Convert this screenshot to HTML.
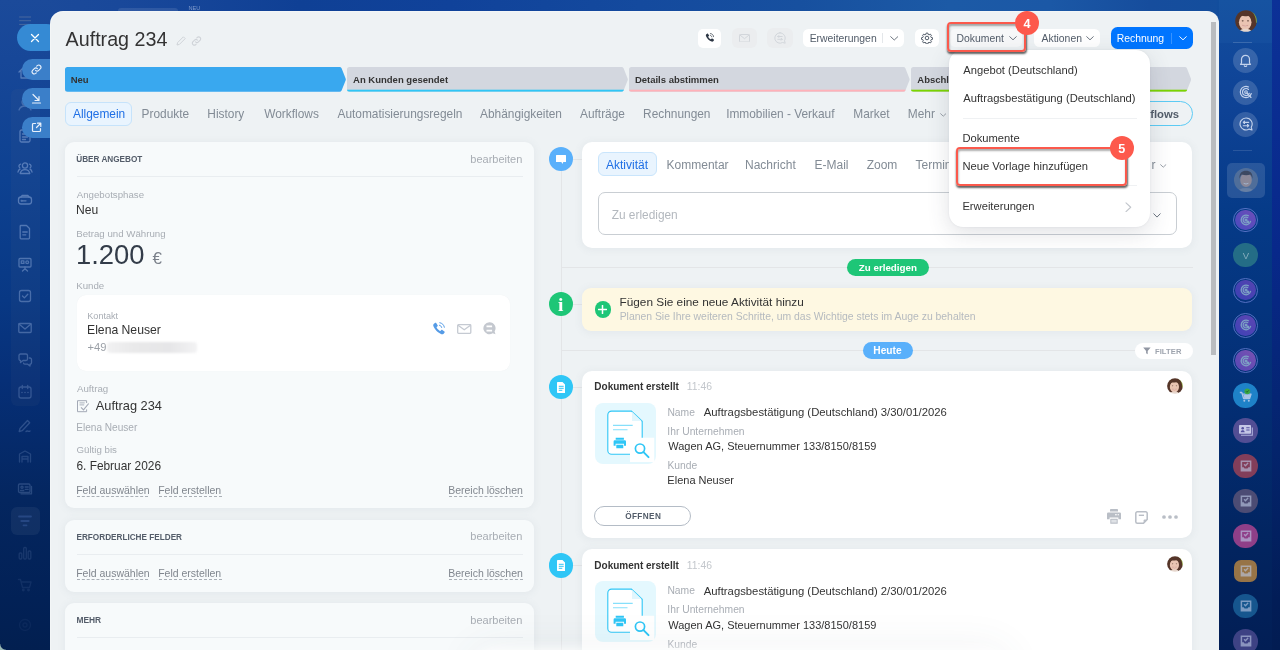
<!DOCTYPE html>
<html lang="de"><head><meta charset="utf-8"><title>Auftrag 234</title>
<style>
html,body{margin:0;padding:0}
body{width:1280px;height:650px;overflow:hidden;position:relative;font-family:"Liberation Sans",sans-serif;background:#0b3a88}
.b{position:absolute;box-sizing:border-box}
.t{position:absolute;line-height:1;white-space:pre}
.dash{border-bottom:1px dashed #b9bec4;padding-bottom:1px}
.serif{font-family:"Liberation Serif",serif;left:558.1px !important}
.t{opacity:.999}

</style></head>
<body>
<div class="b " style="left:0px;top:0px;width:1280.00px;height:650.00px;background:linear-gradient(90deg,#1c4b9a 0,#19489a 120px,#0f4095 300px,#10429a 450px,#144a9e 640px,#17509f 800px,#1c5aa6 950px,#1b58a6 1050px,#164d9d 1150px,#134e9d 1230px,#124e9d 1280px)"></div>
<div class="b " style="left:0px;top:0px;width:52.00px;height:650.00px;background:linear-gradient(180deg,#1b4a9a 0,#174798 60px,#0d4191 180px,#083884 300px,#062f77 380px,#04265f 500px,#022156 600px,#021f50 650px)"></div>
<div class="b " style="left:11px;top:89px;width:29.00px;height:317.00px;background:rgba(120,125,140,.065);border-radius:6px"></div>
<div class="b " style="left:11px;top:507px;width:28.50px;height:28.00px;background:rgba(255,255,255,.055);border-radius:6px"></div>
<div class="b " style="left:1217px;top:0px;width:63.00px;height:650.00px;background:linear-gradient(180deg,#124e9d 0,#10479a 60px,#0e4295 110px,#053a87 220px,#032e74 400px,#02245f 550px,#021e55 650px)"></div>
<div class="b " style="left:1272.4px;top:0px;width:7.60px;height:650.00px;background:linear-gradient(180deg,#0c3197 0,#08288a 250px,#04246c 450px,#021d57 600px,#021c52 650px)"></div>
<div class="b " style="left:1218.7px;top:0px;width:53.70px;height:43.00px;background:rgba(60,130,200,.10)"></div>
<div class="b " style="left:118px;top:8px;width:60.00px;height:6.00px;background:rgba(255,255,255,.10);border-radius:5px"></div>
<span class="t" style="left:188.55px;top:6.01px;font-size:5.6px;color:#7f9bcc;">NEU</span>
<svg class="b" style="left:19px;top:16px;" width="13" height="10" viewBox="0 0 13 10"><path d="M.2 1h11.8M.2 4.7h11.8M.2 8.4h11.8" stroke="#48699f" stroke-width="1" fill="none"/></svg>
<svg class="b" style="left:16px;top:63px;" width="18" height="18" viewBox="0 0 18 18"><g fill="none" stroke="#a9c1ea" stroke-width="1.3" stroke-linecap="round" stroke-linejoin="round" opacity="0.44"><path d="M3 9l6-6 6 6M5 8v7h8V8"/></g></svg>
<svg class="b" style="left:16px;top:95px;" width="18" height="18" viewBox="0 0 18 18"><g fill="none" stroke="#a9c1ea" stroke-width="1.3" stroke-linecap="round" stroke-linejoin="round" opacity="0.31"><circle cx="9" cy="7" r="3"/><path d="M3 15c1-3 3-4 6-4s5 1 6 4"/></g></svg>
<svg class="b" style="left:16px;top:127px;" width="18" height="18" viewBox="0 0 18 18"><g fill="none" stroke="#a9c1ea" stroke-width="1.3" stroke-linecap="round" stroke-linejoin="round" opacity="0.44"><rect x="4" y="3" width="10" height="12" rx="1.5"/><path d="M6.5 7h5M6.5 10h5M6.5 12.5h3"/></g></svg>
<svg class="b" style="left:16px;top:159px;" width="18" height="18" viewBox="0 0 18 18"><g fill="none" stroke="#a9c1ea" stroke-width="1.3" stroke-linecap="round" stroke-linejoin="round" opacity="0.44"><circle cx="9" cy="6.5" r="2.6"/><path d="M4.2 14.5c.6-2.6 2.3-3.8 4.8-3.8s4.2 1.2 4.8 3.8z"/><path d="M4.6 5.2a2 2 0 0 0-.8 3.6M2 13c.2-1.4.9-2.3 2-2.8M13.4 5.2a2 2 0 0 1 .8 3.6M16 13c-.2-1.4-.9-2.3-2-2.8"/></g></svg>
<svg class="b" style="left:16px;top:191px;" width="18" height="18" viewBox="0 0 18 18"><g fill="none" stroke="#a9c1ea" stroke-width="1.3" stroke-linecap="round" stroke-linejoin="round" opacity="0.44"><rect x="2.5" y="6" width="13" height="7" rx="2.5"/><path d="M5 6l1.2-1.5h5.6L13 6M6 9.8h4"/><circle cx="5.6" cy="9.8" r=".4"/></g></svg>
<svg class="b" style="left:16px;top:223px;" width="18" height="18" viewBox="0 0 18 18"><g fill="none" stroke="#a9c1ea" stroke-width="1.3" stroke-linecap="round" stroke-linejoin="round" opacity="0.42"><path d="M5 2.5h5.5L13.5 5.5V15a.8.8 0 0 1-.8.8H5a.8.8 0 0 1-.8-.8V3.300a.8.8 0 0 1 .8-.8z"/><path d="M6.8 9h4.4M6.800 11.800h3"/></g></svg>
<svg class="b" style="left:16px;top:255px;" width="18" height="18" viewBox="0 0 18 18"><g fill="none" stroke="#a9c1ea" stroke-width="1.3" stroke-linecap="round" stroke-linejoin="round" opacity="0.4"><rect x="3" y="3.500" width="12" height="8.500" rx="1"/><path d="M9 12v1.500M6.500 16l2.500-2.300 2.500 2.300"/><rect x="5.300" y="5.800" width="2.600" height="2.600"/><circle cx="11.200" cy="7.200" r="1.400"/></g></svg>
<svg class="b" style="left:16px;top:287px;" width="18" height="18" viewBox="0 0 18 18"><g fill="none" stroke="#a9c1ea" stroke-width="1.3" stroke-linecap="round" stroke-linejoin="round" opacity="0.37"><rect x="3.500" y="3.500" width="11" height="11" rx="2"/><path d="M6.500 9l1.900 1.900 3.400-3.600"/></g></svg>
<svg class="b" style="left:16px;top:319px;" width="18" height="18" viewBox="0 0 18 18"><g fill="none" stroke="#a9c1ea" stroke-width="1.3" stroke-linecap="round" stroke-linejoin="round" opacity="0.35"><rect x="2.800" y="4.500" width="12.400" height="9" rx="1"/><path d="M3 5l6 5 6-5"/></g></svg>
<svg class="b" style="left:16px;top:351px;" width="18" height="18" viewBox="0 0 18 18"><g fill="none" stroke="#a9c1ea" stroke-width="1.3" stroke-linecap="round" stroke-linejoin="round" opacity="0.32"><path d="M3 4.500a1.500 1.500 0 0 1 1.500-1.500h5.500a1.500 1.500 0 0 1 1.500 1.500v3.500a1.500 1.500 0 0 1-1.500 1.500h-3l-2.500 2v-2h-.0a1.500 1.500 0 0 1-1.500-1.500z"/><path d="M13.300 7h.7a1.500 1.500 0 0 1 1.500 1.500v3.200a1.500 1.500 0 0 1-1.500 1.500v1.800l-2.300-1.800h-2.700a1.500 1.500 0 0 1-1.400-1"/></g></svg>
<svg class="b" style="left:16px;top:383px;" width="18" height="18" viewBox="0 0 18 18"><g fill="none" stroke="#a9c1ea" stroke-width="1.3" stroke-linecap="round" stroke-linejoin="round" opacity="0.26"><rect x="3" y="4" width="12" height="11" rx="2"/><path d="M6.300 2.500v3M11.700 2.500v3"/><path d="M6 9.500h.01M9 9.500h.01M12 9.500h.01" stroke-width="1.600"/></g></svg>
<svg class="b" style="left:16px;top:416px;" width="18" height="18" viewBox="0 0 18 18"><g fill="none" stroke="#a9c1ea" stroke-width="1.3" stroke-linecap="round" stroke-linejoin="round" opacity="0.24"><path d="M4 12.500l7.500-8 2.200 2.200-7.500 8-3 .8z"/><path d="M10 15.500c1.500-1.500 2.500.8 4-.5"/></g></svg>
<svg class="b" style="left:16px;top:447px;" width="18" height="18" viewBox="0 0 18 18"><g fill="none" stroke="#a9c1ea" stroke-width="1.3" stroke-linecap="round" stroke-linejoin="round" opacity="0.19"><path d="M3.500 15V7l5.500-3 5.500 3v8"/><path d="M6 15v-5.500h6V15M6 12h6"/></g></svg>
<svg class="b" style="left:16px;top:480px;" width="18" height="18" viewBox="0 0 18 18"><g fill="none" stroke="#a9c1ea" stroke-width="1.3" stroke-linecap="round" stroke-linejoin="round" opacity="0.22"><rect x="2.500" y="4" width="11.500" height="8.500" rx="1.200"/><path d="M5 13.800h10.500V6.500"/><circle cx="6" cy="7.300" r="1.100"/><path d="M4.500 10.500h3.200M9.200 7h3M9.200 9.300h3"/></g></svg>
<svg class="b" style="left:16px;top:512px;" width="18" height="18" viewBox="0 0 18 18"><g stroke="#2f5190" stroke-width="1.800" stroke-linecap="round" opacity=".7"><path d="M3 4.500h12M5.300 9h7.400M7.500 13.300h3"/></g></svg>
<svg class="b" style="left:16px;top:543.5px;" width="18" height="18" viewBox="0 0 18 18"><g fill="none" stroke="#a9c1ea" stroke-width="1.3" stroke-linecap="round" stroke-linejoin="round" opacity="0.13"><rect x="3.200" y="9" width="2.600" height="6" rx="1"/><rect x="7.700" y="3.500" width="2.600" height="11.500" rx="1"/><rect x="12.200" y="7" width="2.600" height="8" rx="1"/></g></svg>
<svg class="b" style="left:16px;top:575.5px;" width="18" height="18" viewBox="0 0 18 18"><g fill="none" stroke="#a9c1ea" stroke-width="1.3" stroke-linecap="round" stroke-linejoin="round" opacity="0.09"><path d="M2.500 3.500h2l2 8h7l1.500-5.500h-10"/><circle cx="7.300" cy="14" r=".8"/><circle cx="12.500" cy="14" r=".8"/></g></svg>
<svg class="b" style="left:16px;top:615.5px;" width="18" height="18" viewBox="0 0 18 18"><g fill="none" stroke="#a9c1ea" stroke-width="1.3" stroke-linecap="round" stroke-linejoin="round" opacity="0.05"><circle cx="9" cy="9" r="5.500"/><circle cx="9" cy="9" r="2"/></g></svg>
<div class="b " style="left:0px;top:644px;width:6.00px;height:6.00px;background:radial-gradient(circle at 6px 0,rgba(0,0,0,0) 5.2px,#9bb9b5 6.2px)"></div>
<div class="b " style="left:16.7px;top:24px;width:43.30px;height:27.00px;background:#358ad4;border-radius:13.500px"></div>
<svg class="b" style="left:30px;top:32.5px;" width="10" height="10" viewBox="0 0 10 10"><path d="M1.500 1.500l7 7M8.500 1.500l-7 7" stroke="#fff" stroke-width="1.300" stroke-linecap="round"/></svg>
<div class="b " style="left:22.3px;top:59px;width:37.70px;height:20.70px;background:#3b7fc9;border-radius:10.300px"></div>
<div class="b " style="left:22.3px;top:88px;width:37.70px;height:20.70px;background:#3b7fc9;border-radius:10.300px"></div>
<div class="b " style="left:22.3px;top:117px;width:37.70px;height:20.70px;background:#3b7fc9;border-radius:10.300px"></div>
<svg class="b" style="left:30.5px;top:63.5px;" width="11" height="11" viewBox="0 0 11 11"><g fill="none" stroke="#e8f0fb" stroke-width="1.150" stroke-linecap="round"><path d="M4.600 6.400a2.200 2.200 0 0 0 3.100 0l1.700-1.700a2.200 2.200 0 0 0-3.100-3.100l-.6.600"/><path d="M6.400 4.600a2.200 2.200 0 0 0-3.100 0l-1.700 1.700a2.200 2.200 0 0 0 3.100 3.100l.6-.6"/></g></svg>
<svg class="b" style="left:30.5px;top:92.5px;" width="11" height="11" viewBox="0 0 11 11"><g fill="none" stroke="#e8f0fb" stroke-width="1.200" stroke-linecap="round" stroke-linejoin="round"><path d="M2 1.500l6 6M4 7.500h4v-4M1.500 10h8"/></g></svg>
<svg class="b" style="left:30.5px;top:121.5px;" width="11" height="11" viewBox="0 0 11 11"><g fill="none" stroke="#e8f0fb" stroke-width="1.200" stroke-linecap="round" stroke-linejoin="round"><path d="M4.500 1.500h-2a1 1 0 0 0-1 1v6a1 1 0 0 0 1 1h6a1 1 0 0 0 1-1v-2"/><path d="M6.500 1.200h3.300v3.300M9.500 1.500l-4 4"/></g></svg>
<div class="b " style="left:50px;top:10.6px;width:1168.70px;height:649.40px;background:#eef2f4;border-radius:13px 12px 0 0;box-shadow:inset 1px 1px 0 rgba(255,255,255,.3)"></div>
<div class="b " style="left:1211.3px;top:22px;width:5.20px;height:333.00px;background:#b9bcbf"></div>
<span class="t" style="left:65.60px;top:30.00px;font-size:19.7px;color:#333;">Auftrag 234</span>
<svg class="b" style="left:176px;top:35.5px;" width="10" height="10" viewBox="0 0 10 10"><path d="M1 9l.6-2.400 5.800-5.800 1.800 1.800-5.800 5.800z" fill="none" stroke="#cfd3d8" stroke-width="1"/></svg>
<svg class="b" style="left:190.5px;top:35.5px;" width="11" height="10" viewBox="0 0 11 10"><g fill="none" stroke="#cfd3d8" stroke-width="1.100" stroke-linecap="round"><path d="M4.600 5.900a2 2 0 0 0 2.800 0l1.800-1.800a2 2 0 0 0-2.800-2.800l-.6.600"/><path d="M6.400 4.100a2 2 0 0 0-2.800 0l-1.800 1.800a2 2 0 0 0 2.800 2.800l.6-.6"/></g></svg>
<div class="b " style="left:697.8px;top:28.6px;width:23.60px;height:19.10px;background:#fff;border-radius:5px"></div>
<svg class="b" style="left:704.5px;top:33px;" width="9.5" height="9.5" viewBox="0 0 19 19"><path fill="#2c3644" d="M4.200 1.300c.5-.4 1.300-.4 1.700.2l2 2.900c.4.500.3 1.200-.1 1.600l-1.200 1.200c-.2.200-.2.500-.1.700.9 1.800 2.300 3.300 4.600 4.700.2.100.5.100.7-.1l1.200-1.200c.4-.4 1.100-.5 1.600-.1l2.900 2c.6.400.6 1.200.2 1.700l-1.300 1.500c-.8.900-2.100 1.200-3.200.8C8.700 15.600 3.600 10.600 1.900 5.800c-.4-1.100-.1-2.400.8-3.200z"/><path fill="none" stroke="#2c3644" stroke-width="1.400" stroke-linecap="round" d="M10.500 4.600c1.600.3 2.800 1.500 3.100 3.100M11 1c3.300.5 5.900 3.100 6.400 6.400"/></svg>
<div class="b " style="left:731.7px;top:28.2px;width:25.80px;height:20.30px;background:#ebedef;border-radius:6px"></div>
<svg class="b" style="left:739.3px;top:33.8px;" width="11" height="8.5" viewBox="0 0 11 8.500"><g fill="none" stroke="#d2d6db" stroke-width="1"><rect x=".5" y=".5" width="10" height="7.500" rx=".8"/><path d="M.8.900l4.700 3.800L10.200.9"/></g></svg>
<div class="b " style="left:766.9px;top:28.2px;width:25.90px;height:20.30px;background:#ebedef;border-radius:6px"></div>
<svg class="b" style="left:773.5px;top:32px;" width="12" height="12" viewBox="0 0 12 12"><g fill="none" stroke="#d2d6db" stroke-width="1" stroke-linecap="round" stroke-linejoin="round"><path d="M6 .8a5.200 5.200 0 1 0 2.600 9.700l2.600.7-.7-2.600A5.200 5.200 0 0 0 6 .8z"/><path d="M3.800 4.500h4.400M4.800 3.500l-1 1 1 1M8.200 7.300h-4.400M7.200 6.300l1 1-1 1"/></g></svg>
<div class="b " style="left:803px;top:28.7px;width:100.80px;height:18.80px;background:#fff;border-radius:5.500px"></div>
<span class="t" style="left:809.67px;top:34.01px;font-size:10.4px;color:#525c69;">Erweiterungen</span>
<div class="b " style="left:882px;top:33px;width:1.00px;height:10.40px;background:#e4e7ea"></div>
<svg class="b" style="left:889.5px;top:36.2px;" width="8.5" height="5" viewBox="0 0 8.500 5"><path d="M.7.700l3.550 3.300L7.800.7" fill="none" stroke="#5f6874" stroke-width=".9" stroke-linecap="round" stroke-linejoin="round"/></svg>
<div class="b " style="left:914.9px;top:28.7px;width:23.90px;height:18.80px;background:#fff;border-radius:5.500px"></div>
<svg class="b" style="left:920.9px;top:32.2px;" width="12" height="12" viewBox="0 0 24 24"><g fill="none" stroke="#525c69" stroke-width="2" stroke-linejoin="round"><circle cx="12" cy="12" r="3.600"/><path d="M10.300 2.200h3.400l.6 2.700 1.900.8 2.300-1.500 2.400 2.400-1.500 2.300.8 1.900 2.700.6v3.400l-2.700.6-.8 1.900 1.500 2.300-2.400 2.400-2.300-1.500-1.900.8-.6 2.700h-3.400l-.6-2.700-1.900-.8-2.300 1.500-2.400-2.400 1.500-2.300-.8-1.900-2.700-.6v-3.400l2.700-.6.800-1.900-1.500-2.300 2.400-2.400 2.300 1.500 1.900-.8z"/></g></svg>
<div class="b " style="left:950.3px;top:28.7px;width:72.20px;height:18.80px;background:#f7f8f9;border-radius:5px"></div>
<span class="t" style="left:956.57px;top:34.02px;font-size:10.4px;color:#525c69;">Dokument</span>
<svg class="b" style="left:1008.5px;top:36.3px;" width="8" height="5" viewBox="0 0 8 5"><path d="M.7.700l3.300 3.100L7.300.7" fill="none" stroke="#5f6874" stroke-width=".9" stroke-linecap="round" stroke-linejoin="round"/></svg>
<div class="b " style="left:1034.3px;top:28.7px;width:66.10px;height:18.80px;background:#fff;border-radius:5.500px"></div>
<span class="t" style="left:1041.50px;top:34.02px;font-size:10.4px;color:#525c69;">Aktionen</span>
<svg class="b" style="left:1086px;top:36.3px;" width="8" height="5" viewBox="0 0 8 5"><path d="M.7.700l3.300 3.100L7.300.7" fill="none" stroke="#5f6874" stroke-width=".9" stroke-linecap="round" stroke-linejoin="round"/></svg>
<div class="b " style="left:1110.5px;top:27.3px;width:82.50px;height:21.40px;background:#0075ff;border-radius:6.500px"></div>
<span class="t" style="left:1116.67px;top:34.02px;font-size:10.4px;color:#fff;">Rechnung</span>
<div class="b " style="left:1171px;top:33px;width:1.00px;height:10.50px;background:rgba(255,255,255,.22)"></div>
<svg class="b" style="left:1179px;top:36.3px;" width="8" height="5" viewBox="0 0 8 5"><path d="M.7.700l3.300 3.100L7.300.7" fill="none" stroke="#fff" stroke-width=".95" stroke-linecap="round" stroke-linejoin="round"/></svg>
<svg class="b" style="left:65px;top:67px;" width="281" height="25" viewBox="0 0 281 25"><defs><clipPath id="c65"><path d="M2.5 0H274.5Q276 0 276.6 1.300L280.6 11.4Q281 12.4 280.6 13.4L276.6 23.5Q276 24.8 274.5 24.8H2.5Q0 24.8 0 22.3V2.5Q0 0 2.5 0Z"/></clipPath></defs><path d="M2.5 0H274.5Q276 0 276.6 1.300L280.6 11.4Q281 12.4 280.6 13.4L276.6 23.5Q276 24.8 274.5 24.8H2.5Q0 24.8 0 22.3V2.5Q0 0 2.5 0Z" fill="#39a8ef"/></svg>
<svg class="b" style="left:347px;top:67px;" width="281" height="25" viewBox="0 0 281 25"><defs><clipPath id="c347"><path d="M2.5 0H274.5Q276 0 276.6 1.300L280.6 11.4Q281 12.4 280.6 13.4L276.6 23.5Q276 24.8 274.5 24.8H2.5Q0 24.8 0 22.3V2.5Q0 0 2.5 0Z"/></clipPath></defs><path d="M2.5 0H274.5Q276 0 276.6 1.300L280.6 11.4Q281 12.4 280.6 13.4L276.6 23.5Q276 24.8 274.5 24.8H2.5Q0 24.8 0 22.3V2.5Q0 0 2.5 0Z" fill="#d3d7df"/><rect x="0" y="22.7" width="277" height="2.100" fill="#2fc6f6" clip-path="url(#c347)"/></svg>
<svg class="b" style="left:629.2px;top:67px;" width="280.79999999999995" height="25" viewBox="0 0 280.79999999999995 25"><defs><clipPath id="c629"><path d="M2.5 0H274.29999999999995Q275.79999999999995 0 276.4 1.300L280.4 11.4Q280.79999999999995 12.4 280.4 13.4L276.4 23.5Q275.79999999999995 24.8 274.29999999999995 24.8H2.5Q0 24.8 0 22.3V2.5Q0 0 2.5 0Z"/></clipPath></defs><path d="M2.5 0H274.29999999999995Q275.79999999999995 0 276.4 1.300L280.4 11.4Q280.79999999999995 12.4 280.4 13.4L276.4 23.5Q275.79999999999995 24.8 274.29999999999995 24.8H2.5Q0 24.8 0 22.3V2.5Q0 0 2.5 0Z" fill="#d3d7df"/><rect x="0" y="22.7" width="276.79999999999995" height="2.100" fill="#ffb1b8" clip-path="url(#c629)"/></svg>
<svg class="b" style="left:911.2px;top:67px;" width="280.29999999999995" height="25" viewBox="0 0 280.29999999999995 25"><defs><clipPath id="c911"><path d="M2.5 0H273.79999999999995Q275.29999999999995 0 275.9 1.300L279.9 11.4Q280.29999999999995 12.4 279.9 13.4L275.9 23.5Q275.29999999999995 24.8 273.79999999999995 24.8H2.5Q0 24.8 0 22.3V2.5Q0 0 2.5 0Z"/></clipPath></defs><path d="M2.5 0H273.79999999999995Q275.29999999999995 0 275.9 1.300L279.9 11.4Q280.29999999999995 12.4 279.9 13.4L275.9 23.5Q275.29999999999995 24.8 273.79999999999995 24.8H2.5Q0 24.8 0 22.3V2.5Q0 0 2.5 0Z" fill="#d3d7df"/><rect x="0" y="22.7" width="276.29999999999995" height="2.100" fill="#7bd500" clip-path="url(#c911)"/></svg>
<span class="t" style="left:70.63px;top:75.01px;font-size:9.5px;color:#333;font-weight:700;">Neu</span>
<span class="t" style="left:353.06px;top:75.01px;font-size:9.5px;color:#333;font-weight:700;">An Kunden gesendet</span>
<span class="t" style="left:634.88px;top:75.01px;font-size:9.5px;color:#333;font-weight:700;">Details abstimmen</span>
<span class="t" style="left:917.31px;top:75.01px;font-size:9.5px;color:#333;font-weight:700;">Abschluss</span>
<div class="b " style="left:65.3px;top:101.8px;width:66.50px;height:23.90px;background:#e9f4fe;border:1px solid #c6e3fb;border-radius:6px"></div>
<span class="t" style="left:73.00px;top:109.01px;font-size:11.9px;color:#1f6fe5;">Allgemein</span>
<span class="t" style="left:141.55px;top:109.01px;font-size:11.9px;color:#828b95;">Produkte</span>
<span class="t" style="left:207.30px;top:109.01px;font-size:11.9px;color:#828b95;">History</span>
<span class="t" style="left:264.25px;top:109.01px;font-size:11.9px;color:#828b95;">Workflows</span>
<span class="t" style="left:337.50px;top:109.01px;font-size:11.9px;color:#828b95;">Automatisierungsregeln</span>
<span class="t" style="left:480.00px;top:109.01px;font-size:11.9px;color:#828b95;">Abhängigkeiten</span>
<span class="t" style="left:580.00px;top:109.01px;font-size:11.9px;color:#828b95;">Aufträge</span>
<span class="t" style="left:643.05px;top:109.01px;font-size:11.9px;color:#828b95;">Rechnungen</span>
<span class="t" style="left:726.13px;top:109.01px;font-size:11.9px;color:#828b95;">Immobilien - Verkauf</span>
<span class="t" style="left:853.30px;top:109.01px;font-size:11.9px;color:#828b95;">Market</span>
<span class="t" style="left:907.80px;top:109.01px;font-size:11.9px;color:#828b95;">Mehr</span>
<svg class="b" style="left:939.5px;top:112.5px;" width="6.5" height="4.5" viewBox="0 0 6.500 4.500"><path d="M.6.700l2.650 2.500L5.900.7" fill="none" stroke="#9aa1a9" stroke-width="1" stroke-linecap="round" stroke-linejoin="round"/></svg>
<div class="b " style="left:1100px;top:101px;width:93.00px;height:25.00px;border:1px solid #5ccbf4;border-radius:12.500px"></div>
<span class="t" style="left:1122.18px;top:109.01px;font-size:11.3px;color:#525c69;font-weight:700;">Workflows</span>
<div class="b " style="left:65px;top:142px;width:469.00px;height:366.00px;background:#f7fafb;border-radius:9px;box-shadow:0 1px 7px 2px rgba(100,115,135,.06)"></div>
<div class="b " style="left:65px;top:520px;width:469.00px;height:71.50px;background:#f7fafb;border-radius:9px;box-shadow:0 1px 7px 2px rgba(100,115,135,.06)"></div>
<div class="b " style="left:65px;top:603px;width:469.00px;height:67.00px;background:#f7fafb;border-radius:9px;box-shadow:0 1px 7px 2px rgba(100,115,135,.06)"></div>
<span class="t" style="left:76.26px;top:156.01px;font-size:8.2px;color:#535c69;font-weight:700;">ÜBER ANGEBOT</span>
<span class="t" style="left:470.34px;top:154.00px;font-size:11.0px;color:#a8adb4;">bearbeiten</span>
<div class="b " style="left:77px;top:175.5px;width:445.50px;height:1.00px;background:#e9edf0"></div>
<span class="t" style="left:76.75px;top:190.01px;font-size:9.7px;color:#a8adb4;">Angebotsphase</span>
<span class="t" style="left:76.03px;top:204.00px;font-size:12.1px;color:#333;">Neu</span>
<span class="t" style="left:76.22px;top:229.01px;font-size:9.7px;color:#a8adb4;">Betrag und Währung</span>
<span class="t" style="left:75.94px;top:241.00px;font-size:27.4px;color:#333c49;">1.200</span>
<span class="t" style="left:152.41px;top:250.00px;font-size:17px;color:#7b818b;">€</span>
<span class="t" style="left:76.22px;top:281.01px;font-size:9.7px;color:#a8adb4;">Kunde</span>
<div class="b " style="left:77px;top:294.5px;width:433.00px;height:76.50px;background:#fff;border-radius:9px;box-shadow:0 0 1px rgba(0,0,0,.06)"></div>
<span class="t" style="left:87.27px;top:312.00px;font-size:9.1px;color:#a8adb4;">Kontakt</span>
<span class="t" style="left:87.02px;top:324.01px;font-size:12.2px;color:#333;">Elena Neuser</span>
<span class="t" style="left:87.50px;top:342.00px;font-size:11.2px;color:#9a9fa6;">+49</span>
<div class="b " style="left:107px;top:341.5px;width:90.00px;height:11.00px;background:linear-gradient(90deg,#f1f1f2 0,#e9e9ea 30%,#e6e6e8 70%,#f3f3f4 100%);border-radius:3px;filter:blur(1px)"></div>
<svg class="b" style="left:432px;top:321.5px;" width="13.5" height="13.5" viewBox="0 0 19 19"><path fill="#559be6" d="M4.200 1.300c.5-.4 1.300-.4 1.700.2l2 2.900c.4.500.3 1.200-.1 1.600l-1.200 1.200c-.2.200-.2.500-.1.700.9 1.800 2.300 3.300 4.600 4.700.2.100.5.100.7-.1l1.200-1.200c.4-.4 1.100-.5 1.600-.1l2.900 2c.6.400.6 1.200.2 1.700l-1.300 1.500c-.8.900-2.100 1.200-3.200.8C8.700 15.600 3.600 10.600 1.900 5.800c-.4-1.100-.1-2.400.8-3.200z"/><path fill="none" stroke="#559be6" stroke-width="1.400" stroke-linecap="round" d="M10.500 4.600c1.600.3 2.800 1.500 3.100 3.100M11 1c3.300.5 5.900 3.100 6.400 6.400"/></svg>
<svg class="b" style="left:457px;top:323.5px;" width="14.5" height="10" viewBox="0 0 14.500 10"><g fill="none" stroke="#c5cad2" stroke-width="1.300"><rect x=".7" y=".7" width="13.100" height="8.600" rx=".8"/><path d="M1 1.200l6.250 4.600 6.250-4.600"/></g></svg>
<svg class="b" style="left:483px;top:321.8px;" width="13" height="13" viewBox="0 0 13 13"><path d="M6.300.3a6 6 0 1 0 3.400 11l2.800.9-.9-2.700A6 6 0 0 0 6.300.3z" fill="#c4c8cf"/><path d="M3.500 4.300h5.600M3.500 8.700h5.600" stroke="#fff" stroke-width="1.700"/></svg>
<span class="t" style="left:77.00px;top:384.01px;font-size:9.7px;color:#a8adb4;">Auftrag</span>
<svg class="b" style="left:76px;top:399px;" width="14" height="14" viewBox="0 0 14 14"><g fill="none" stroke="#a3a9b6" stroke-width="1" stroke-linejoin="miter"><path d="M10.600 4V1.700H1.500v11h9.100v-2.300"/><path d="M3.500 3.900h5.200M3.500 5.900h4.700" stroke-width=".9"/><path d="M5 8.300l2.500 2.500 5.200-6.300" stroke-width="1.150"/></g></svg>
<span class="t" style="left:95.75px;top:400.01px;font-size:12.8px;color:#333;">Auftrag 234</span>
<span class="t" style="left:76.19px;top:423.01px;font-size:10.1px;color:#a8adb4;">Elena Neuser</span>
<span class="t" style="left:76.52px;top:445.01px;font-size:9.7px;color:#a8adb4;">Gültig bis</span>
<span class="t" style="left:76.41px;top:461.02px;font-size:11.9px;color:#333;">6. Februar 2026</span>
<span class="t" style="left:76.16px;top:485.01px;font-size:10.5px;color:#80868e;">Feld auswählen</span>
<span class="t" style="left:158.16px;top:485.01px;font-size:10.5px;color:#80868e;">Feld erstellen</span>
<span class="t" style="left:448.16px;top:485.01px;font-size:10.5px;color:#80868e;">Bereich löschen</span>
<div class="b " style="left:77px;top:495.5px;width:70.50px;height:1.00px;border-top:1px dashed #a9afb6"></div>
<div class="b " style="left:159px;top:495.5px;width:62.50px;height:1.00px;border-top:1px dashed #a9afb6"></div>
<div class="b " style="left:449px;top:495.5px;width:74.30px;height:1.00px;border-top:1px dashed #a9afb6"></div>
<span class="t" style="left:76.47px;top:534.01px;font-size:8.2px;color:#535c69;font-weight:700;">ERFORDERLICHE FELDER</span>
<span class="t" style="left:470.34px;top:531.00px;font-size:11.0px;color:#a8adb4;">bearbeiten</span>
<div class="b " style="left:77px;top:553.5px;width:445.50px;height:1.00px;background:#e9edf0"></div>
<span class="t" style="left:76.16px;top:568.00px;font-size:10.5px;color:#80868e;">Feld auswählen</span>
<span class="t" style="left:158.16px;top:568.00px;font-size:10.5px;color:#80868e;">Feld erstellen</span>
<span class="t" style="left:448.16px;top:568.00px;font-size:10.5px;color:#80868e;">Bereich löschen</span>
<div class="b " style="left:77px;top:578.8px;width:70.50px;height:1.00px;border-top:1px dashed #a9afb6"></div>
<div class="b " style="left:159px;top:578.8px;width:62.50px;height:1.00px;border-top:1px dashed #a9afb6"></div>
<div class="b " style="left:449px;top:578.8px;width:74.30px;height:1.00px;border-top:1px dashed #a9afb6"></div>
<span class="t" style="left:76.45px;top:616.01px;font-size:8.4px;color:#535c69;font-weight:700;">MEHR</span>
<span class="t" style="left:470.34px;top:615.01px;font-size:11.0px;color:#a8adb4;">bearbeiten</span>
<div class="b " style="left:77px;top:636.5px;width:445.50px;height:1.00px;background:#e9edf0"></div>
<div class="b " style="left:561px;top:160px;width:1.00px;height:500.00px;background:#e3e5e7"></div>
<div class="b " style="left:573px;top:159px;width:10.00px;height:1.00px;background:#e3e5e7"></div>
<div class="b " style="left:562px;top:266.5px;width:630.50px;height:1.00px;background:#e3e5e7"></div>
<div class="b " style="left:562px;top:349.8px;width:630.50px;height:1.00px;background:#e3e5e7"></div>
<div class="b " style="left:573px;top:303.5px;width:10.00px;height:1.00px;background:#e3e5e7"></div>
<div class="b " style="left:573px;top:386.8px;width:10.00px;height:1.00px;background:#e3e5e7"></div>
<div class="b " style="left:573px;top:565.3px;width:10.00px;height:1.00px;background:#e3e5e7"></div>
<div class="b " style="left:582.3px;top:142px;width:610.20px;height:105.80px;background:#fff;border-radius:10px;box-shadow:0 1px 7px 2px rgba(100,115,135,.06)"></div>
<div class="b " style="left:548.75px;top:146.5px;width:24.40px;height:24.40px;background:#59b0fb;border-radius:50%"></div>
<svg class="b" style="left:556px;top:155px;" width="10" height="9.5" viewBox="0 0 10 9.500"><path d="M.4 0h9.200a.4.400 0 0 1 .4.400v6.300a.4.400 0 0 1-.4.400H7.300l-.9 1.900-1-1.900H.4a.4.400 0 0 1-.4-.4V.4A.4.400 0 0 1 .4 0z" fill="#fff"/></svg>
<div class="b " style="left:598px;top:152px;width:58.75px;height:24.20px;background:#e9f4fe;border:1px solid #c9e5fc;border-radius:6px"></div>
<span class="t" style="left:606.00px;top:159.01px;font-size:12.0px;color:#1f6fe5;">Aktivität</span>
<span class="t" style="left:666.54px;top:159.01px;font-size:12.0px;color:#828b95;">Kommentar</span>
<span class="t" style="left:745.04px;top:159.01px;font-size:12.0px;color:#828b95;">Nachricht</span>
<span class="t" style="left:814.54px;top:159.01px;font-size:12.0px;color:#828b95;">E-Mail</span>
<span class="t" style="left:866.64px;top:159.01px;font-size:12.0px;color:#828b95;">Zoom</span>
<span class="t" style="left:915.51px;top:159.01px;font-size:12.0px;color:#828b95;">Termin</span>
<div class="b " style="left:1151.2px;top:155px;width:6.80px;height:20.00px;overflow:hidden"><div style="position:absolute;left:-1151.2px;top:-155px"><span class="t" style="left:1128.12px;top:159.01px;font-size:12.0px;color:#828b95;">Mehr</span></div></div>
<svg class="b" style="left:1160px;top:163.5px;" width="6.5" height="4.5" viewBox="0 0 6.500 4.500"><path d="M.6.700l2.650 2.500L5.900.7" fill="none" stroke="#9aa1a9" stroke-width="1" stroke-linecap="round" stroke-linejoin="round"/></svg>
<div class="b " style="left:598px;top:192.2px;width:578.50px;height:43.20px;background:#fff;border:1px solid #c9ced3;border-radius:7px"></div>
<span class="t" style="left:611.64px;top:210.02px;font-size:11.9px;color:#b3b8be;">Zu erledigen</span>
<svg class="b" style="left:1153px;top:212.5px;" width="8" height="5.5" viewBox="0 0 8 5.500"><path d="M.8.800l3.200 3.300L7.200.8" fill="none" stroke="#6a737f" stroke-width="1" stroke-linecap="round" stroke-linejoin="round"/></svg>
<div class="b " style="left:847px;top:259.3px;width:81.50px;height:16.70px;background:#1ec677;border-radius:8.500px"></div>
<span class="t" style="left:858.75px;top:263.01px;font-size:9.8px;color:#fff;font-weight:700;">Zu erledigen</span>
<div class="b " style="left:582.3px;top:287.5px;width:610.20px;height:43.00px;background:#fef8e2;border-radius:9px;box-shadow:0 1px 7px 2px rgba(100,115,135,.06)"></div>
<div class="b " style="left:548.75px;top:292px;width:24.40px;height:24.40px;background:#1ec677;border-radius:50%"></div>
<span class="t serif" style="left:-1.27px;top:295.00px;font-size:19.5px;color:#fff;font-weight:700;">i</span>
<div class="b " style="left:594.5px;top:300.8px;width:16.80px;height:16.80px;background:#1ec677;border-radius:50%"></div>
<svg class="b" style="left:598.4px;top:304.7px;" width="9" height="9" viewBox="0 0 9 9"><path d="M4.500.500v8M.500 4.500h8" stroke="#fff" stroke-width="1.500" stroke-linecap="round"/></svg>
<span class="t" style="left:619.56px;top:297.01px;font-size:11.8px;color:#333;">Fügen Sie eine neue Aktivität hinzu</span>
<span class="t" style="left:619.67px;top:312.01px;font-size:10.4px;color:#b5babf;">Planen Sie Ihre weiteren Schritte, um das Wichtige stets im Auge zu behalten</span>
<div class="b " style="left:862.5px;top:342.4px;width:50.20px;height:16.90px;background:#59b0fb;border-radius:8.500px"></div>
<span class="t" style="left:873.34px;top:346.01px;font-size:10.2px;color:#fff;font-weight:700;">Heute</span>
<div class="b " style="left:1134.7px;top:343px;width:58.30px;height:16.30px;background:#fff;border-radius:8.500px"></div>
<svg class="b" style="left:1143px;top:347px;" width="8" height="8" viewBox="0 0 8 8"><path d="M.2.600h7.400L4.700 3.900v3.300L3.100 6.200V3.900z" fill="#9197a3"/></svg>
<span class="t" style="left:1154.91px;top:348.01px;font-size:7.6px;color:#9ea4ae;font-weight:700;letter-spacing:0.1px;">FILTER</span>
<div class="b " style="left:582.3px;top:371px;width:610.20px;height:166.50px;background:#fff;border-radius:10px;box-shadow:0 1px 7px 2px rgba(100,115,135,.06)"></div>
<div class="b " style="left:548.75px;top:375px;width:24.40px;height:24.40px;background:#2fc6f6;border-radius:50%"></div>
<svg class="b" style="left:556.8px;top:381.7px;" width="8.5" height="11" viewBox="0 0 8.500 11"><path d="M.8 0h4.700l3 3v7.200a.8.800 0 0 1-.8.800H.8a.8.800 0 0 1-.8-.8V.8A.8.800 0 0 1 .8 0z" fill="#fff"/><path d="M1.800 4.300h4.900M1.800 6.300h4.900M1.800 8.300h3.500" stroke="#2fc6f6" stroke-width="1"/></svg>
<span class="t" style="left:594.35px;top:382.02px;font-size:10.0px;color:#333;font-weight:700;">Dokument erstellt</span>
<span class="t" style="left:686.72px;top:382.01px;font-size:10.4px;color:#c3c7cc;">11:46</span>
<svg class="b" style="left:1166.5px;top:378px;" width="16" height="16" viewBox="0 0 22 22"><defs><clipPath id="av0"><circle cx="11" cy="11" r="10.800"/></clipPath></defs><g clip-path="url(#av0)"><g filter="url(#bl1)"><rect x="-2" y="-2" width="26" height="26" fill="#553629"/><path d="M15 -1h9v13l-3 1c0-6-2-10-6-13z" fill="#8aa63a"/><ellipse cx="10.200" cy="12.300" rx="6.300" ry="7.600" fill="#eac4b2"/><path d="M2.500 14C1.500 5 5.500 1.500 10.500 1.500S20 4.500 19.500 13c-.4-4-1.600-6.500-3.500-7.800-3 1.300-7.500 1.300-9.500.6C4.500 7.500 3.300 10 2.500 14z" fill="#553629"/><path d="M7.300 15.300q2.900 2.600 5.900 0-2.900.7-5.900 0z" fill="#fff" stroke="#c98b80" stroke-width=".5"/><ellipse cx="7.700" cy="10.800" rx="1" ry=".6" fill="#5a4036"/><ellipse cx="13" cy="10.800" rx="1" ry=".6" fill="#5a4036"/><path d="M4 22c1-2.500 3-3.300 6.500-3.300s5 .8 6.500 3.300z" fill="#e6d6cc"/></g></g></svg>
<div class="b " style="left:594.8px;top:402.8px;width:60.90px;height:60.90px;background:#e4f8fe;border-radius:8px"></div>
<svg class="b" style="left:605px;top:409px;" width="52" height="56" viewBox="0 0 52 56"><path d="M6.600 2.100h19.800l10.800 10.200v29.100a3.800 3.800 0 0 1-3.800 3.800H6.600a3.800 3.800 0 0 1-3.800-3.800V5.900a3.800 3.800 0 0 1 3.800-3.800z" fill="#fff" stroke="#2fc6f6" stroke-width="1.100"/><path d="M27 2.800v9.200h9.600z" fill="#e1f6fd"/><path d="M8 16.400h19.700M8 20.800h14.500" stroke="#86dffa" stroke-width="1.100"/><path d="M10.700 28.700h8.200v2h-8.200zM9.800 31.200h10a1.200 1.200 0 0 1 1.200 1.200v4.300h-2v-2h-8.400v2h-2v-4.300a1.200 1.200 0 0 1 1.200-1.200zM11.300 35.700h7v3.500h-7z" fill="#2fc6f6"/><path d="M33 28.800h16.200v24.200H25V36.800a8 8 0 0 1 8-8z" fill="#fff"/><circle cx="35" cy="39.600" r="4.600" fill="none" stroke="#2fc6f6" stroke-width="1.700"/><path d="M38.500 43.100l5 5" stroke="#2fc6f6" stroke-width="2" stroke-linecap="round"/></svg>
<span class="t" style="left:667.43px;top:408.01px;font-size:10.3px;color:#a8adb4;">Name</span>
<span class="t" style="left:703.75px;top:407.01px;font-size:11.3px;color:#333;">Auftragsbestätigung (Deutschland) 3/30/01/2026</span>
<span class="t" style="left:667.32px;top:427.01px;font-size:10.3px;color:#a8adb4;">Ihr Unternehmen</span>
<span class="t" style="left:668.25px;top:441.00px;font-size:11.0px;color:#333;">Wagen AG, Steuernummer 133/8150/8159</span>
<span class="t" style="left:667.43px;top:461.01px;font-size:10.3px;color:#a8adb4;">Kunde</span>
<span class="t" style="left:667.37px;top:475.00px;font-size:11.0px;color:#333;">Elena Neuser</span>
<div class="b " style="left:594.4px;top:506px;width:96.40px;height:19.80px;border:1px solid #b4bcc6;border-radius:10px;background:#fff"></div>
<span class="t" style="left:625.17px;top:513.00px;font-size:8.2px;color:#525c69;font-weight:700;letter-spacing:0.4px;">ÖFFNEN</span>
<svg class="b" style="left:1107px;top:509px;" width="14" height="15" viewBox="0 0 14 15"><g fill="#b9bec6"><rect x="3" y="0" width="8" height="2.600" rx=".4"/><path d="M1.200 3.600h11.600a1.200 1.200 0 0 1 1.200 1.200v5.400h-2.600V8.600H2.600v1.600H0V4.800a1.200 1.200 0 0 1 1.200-1.200z"/><rect x="3.300" y="9.700" width="7.400" height="5" rx=".3"/></g><rect x="8" y="5.200" width="1.800" height="1.100" fill="#fff"/><rect x="10.600" y="5.200" width="1.400" height="1.100" fill="#fff"/><rect x="4.300" y="10.800" width="5.400" height="2.800" fill="#dfe2e6"/></svg>
<svg class="b" style="left:1135px;top:510.7px;" width="13" height="13" viewBox="0 0 13 13"><path d="M2.300.800h8.400a1.500 1.500 0 0 1 1.500 1.500v6.200l-3.700 3.700H2.300a1.500 1.500 0 0 1-1.500-1.500V2.300A1.500 1.500 0 0 1 2.300.800z" fill="none" stroke="#b9bec6" stroke-width="1.500"/><path d="M12 8.600l-3.400 3.400V9.600a1 1 0 0 1 1-1z" fill="#b9bec6"/><path d="M3.800 4.300h5.200" stroke="#b9bec6" stroke-width="1.400"/></svg>
<svg class="b" style="left:1162px;top:515px;" width="16" height="4" viewBox="0 0 16 4"><g fill="#b9bec6"><circle cx="2" cy="2" r="1.850"/><circle cx="8" cy="2" r="1.850"/><circle cx="14" cy="2" r="1.850"/></g></svg>
<div class="b " style="left:582.3px;top:549.4px;width:610.20px;height:166.50px;background:#fff;border-radius:10px;box-shadow:0 1px 7px 2px rgba(100,115,135,.06)"></div>
<div class="b " style="left:548.75px;top:553.4px;width:24.40px;height:24.40px;background:#2fc6f6;border-radius:50%"></div>
<svg class="b" style="left:556.8px;top:560.1px;" width="8.5" height="11" viewBox="0 0 8.500 11"><path d="M.8 0h4.700l3 3v7.200a.8.800 0 0 1-.8.800H.8a.8.800 0 0 1-.8-.8V.8A.8.800 0 0 1 .8 0z" fill="#fff"/><path d="M1.800 4.300h4.900M1.800 6.300h4.900M1.800 8.300h3.500" stroke="#2fc6f6" stroke-width="1"/></svg>
<span class="t" style="left:594.35px;top:561.01px;font-size:10.0px;color:#333;font-weight:700;">Dokument erstellt</span>
<span class="t" style="left:686.72px;top:561.02px;font-size:10.4px;color:#c3c7cc;">11:46</span>
<svg class="b" style="left:1166.5px;top:556.4px;" width="16" height="16" viewBox="0 0 22 22"><defs><clipPath id="av178"><circle cx="11" cy="11" r="10.800"/></clipPath></defs><g clip-path="url(#av178)"><g filter="url(#bl1)"><rect x="-2" y="-2" width="26" height="26" fill="#553629"/><path d="M15 -1h9v13l-3 1c0-6-2-10-6-13z" fill="#8aa63a"/><ellipse cx="10.200" cy="12.300" rx="6.300" ry="7.600" fill="#eac4b2"/><path d="M2.500 14C1.500 5 5.500 1.500 10.500 1.500S20 4.500 19.500 13c-.4-4-1.600-6.500-3.500-7.800-3 1.300-7.500 1.300-9.500.6C4.500 7.500 3.300 10 2.500 14z" fill="#553629"/><path d="M7.300 15.300q2.900 2.600 5.900 0-2.900.7-5.900 0z" fill="#fff" stroke="#c98b80" stroke-width=".5"/><ellipse cx="7.700" cy="10.800" rx="1" ry=".6" fill="#5a4036"/><ellipse cx="13" cy="10.800" rx="1" ry=".6" fill="#5a4036"/><path d="M4 22c1-2.500 3-3.300 6.500-3.300s5 .8 6.500 3.300z" fill="#e6d6cc"/></g></g></svg>
<div class="b " style="left:594.8px;top:581.1999999999999px;width:60.90px;height:60.90px;background:#e4f8fe;border-radius:8px"></div>
<svg class="b" style="left:605px;top:587.4px;" width="52" height="56" viewBox="0 0 52 56"><path d="M6.600 2.100h19.800l10.800 10.200v29.100a3.800 3.800 0 0 1-3.800 3.800H6.600a3.800 3.800 0 0 1-3.800-3.800V5.900a3.800 3.800 0 0 1 3.800-3.800z" fill="#fff" stroke="#2fc6f6" stroke-width="1.100"/><path d="M27 2.800v9.200h9.600z" fill="#e1f6fd"/><path d="M8 16.400h19.700M8 20.800h14.500" stroke="#86dffa" stroke-width="1.100"/><path d="M10.700 28.700h8.200v2h-8.200zM9.800 31.200h10a1.200 1.200 0 0 1 1.200 1.200v4.300h-2v-2h-8.400v2h-2v-4.300a1.200 1.200 0 0 1 1.200-1.200zM11.300 35.700h7v3.500h-7z" fill="#2fc6f6"/><path d="M33 28.800h16.200v24.200H25V36.800a8 8 0 0 1 8-8z" fill="#fff"/><circle cx="35" cy="39.600" r="4.600" fill="none" stroke="#2fc6f6" stroke-width="1.700"/><path d="M38.500 43.100l5 5" stroke="#2fc6f6" stroke-width="2" stroke-linecap="round"/></svg>
<span class="t" style="left:667.43px;top:586.01px;font-size:10.3px;color:#a8adb4;">Name</span>
<span class="t" style="left:703.75px;top:586.00px;font-size:11.3px;color:#333;">Auftragsbestätigung (Deutschland) 2/30/01/2026</span>
<span class="t" style="left:667.32px;top:605.01px;font-size:10.3px;color:#a8adb4;">Ihr Unternehmen</span>
<span class="t" style="left:668.25px;top:620.01px;font-size:11.0px;color:#333;">Wagen AG, Steuernummer 133/8150/8159</span>
<span class="t" style="left:667.43px;top:640.01px;font-size:10.3px;color:#a8adb4;">Kunde</span>
<span class="t" style="left:667.37px;top:654.01px;font-size:11.0px;color:#333;">Elena Neuser</span>
<div class="b " style="left:594.4px;top:684.4px;width:96.40px;height:19.80px;border:1px solid #b4bcc6;border-radius:10px;background:#fff"></div>
<span class="t" style="left:625.17px;top:692.01px;font-size:8.2px;color:#525c69;font-weight:700;letter-spacing:0.4px;">ÖFFNEN</span>
<svg class="b" style="left:1107px;top:687.4px;" width="14" height="15" viewBox="0 0 14 15"><g fill="#b9bec6"><rect x="3" y="0" width="8" height="2.600" rx=".4"/><path d="M1.200 3.600h11.600a1.200 1.200 0 0 1 1.200 1.200v5.400h-2.600V8.600H2.600v1.600H0V4.800a1.200 1.200 0 0 1 1.200-1.200z"/><rect x="3.300" y="9.700" width="7.400" height="5" rx=".3"/></g><rect x="8" y="5.200" width="1.800" height="1.100" fill="#fff"/><rect x="10.600" y="5.200" width="1.400" height="1.100" fill="#fff"/><rect x="4.300" y="10.800" width="5.400" height="2.800" fill="#dfe2e6"/></svg>
<svg class="b" style="left:1135px;top:689.1px;" width="13" height="13" viewBox="0 0 13 13"><path d="M2.300.800h8.400a1.500 1.500 0 0 1 1.500 1.500v6.200l-3.700 3.700H2.300a1.500 1.500 0 0 1-1.500-1.500V2.300A1.500 1.500 0 0 1 2.300.800z" fill="none" stroke="#b9bec6" stroke-width="1.500"/><path d="M12 8.600l-3.400 3.400V9.600a1 1 0 0 1 1-1z" fill="#b9bec6"/><path d="M3.800 4.300h5.200" stroke="#b9bec6" stroke-width="1.400"/></svg>
<svg class="b" style="left:1162px;top:693.4px;" width="16" height="4" viewBox="0 0 16 4"><g fill="#b9bec6"><circle cx="2" cy="2" r="1.850"/><circle cx="8" cy="2" r="1.850"/><circle cx="14" cy="2" r="1.850"/></g></svg>
<div class="b " style="left:480px;top:656px;width:520.00px;height:44.00px;background:#fff;border-radius:14px;box-shadow:0 0 12px 8px rgba(255,255,255,.9),0 0 40px 10px rgba(70,80,100,.07)"></div>
<svg class="b" style="left:1234.6px;top:10px;" width="22" height="22" viewBox="0 0 22 22"><defs><clipPath id="uav"><circle cx="11" cy="11" r="10.800"/></clipPath><filter id="bl1" x="-10%" y="-10%" width="120%" height="120%"><feGaussianBlur stdDeviation=".55"/></filter></defs><g clip-path="url(#uav)"><g filter="url(#bl1)"><rect x="-2" y="-2" width="26" height="26" fill="#553629"/><path d="M15 -1h9v13l-3 1c0-6-2-10-6-13z" fill="#8aa63a"/><ellipse cx="10.200" cy="12.300" rx="6.300" ry="7.600" fill="#eac4b2"/><path d="M2.500 14C1.500 5 5.500 1.500 10.500 1.500S20 4.500 19.500 13c-.4-4-1.600-6.500-3.500-7.800-3 1.300-7.500 1.300-9.500.6C4.500 7.500 3.300 10 2.500 14z" fill="#553629"/><path d="M7.300 15.300q2.900 2.600 5.900 0-2.900.7-5.900 0z" fill="#fff" stroke="#c98b80" stroke-width=".5"/><ellipse cx="7.700" cy="10.800" rx="1" ry=".6" fill="#5a4036"/><ellipse cx="13" cy="10.800" rx="1" ry=".6" fill="#5a4036"/><path d="M4 22c1-2.500 3-3.300 6.500-3.300s5 .8 6.500 3.300z" fill="#e6d6cc"/></g></g></svg>
<div class="b " style="left:1233px;top:42px;width:18.50px;height:1.00px;background:rgba(255,255,255,.16)"></div>
<div class="b " style="left:1233px;top:150.2px;width:18.50px;height:1.00px;background:rgba(255,255,255,.13)"></div>
<div class="b " style="left:1233.1px;top:47.8px;width:25.00px;height:25.00px;border-radius:50%;background:rgba(255,255,255,.16)"></div>
<svg class="b" style="left:1239.1px;top:53.3px;" width="13" height="14" viewBox="0 0 13 14"><g fill="none" stroke="#c3d2ec" stroke-width="1.200" stroke-linecap="round" stroke-linejoin="round"><path d="M2.500 10V6.300a4 4 0 0 1 8 0V10l1 1.300H1.500z"/><path d="M5.300 12.800a1.300 1.300 0 0 0 2.400 0"/></g></svg>
<div class="b " style="left:1233.1px;top:79.9px;width:25.00px;height:25.00px;border-radius:50%;background:rgba(255,255,255,.16)"></div>
<svg class="b" style="left:1238.6px;top:85.4px;" width="14" height="14" viewBox="0 0 14 14"><g fill="none" stroke="#c3d2ec" stroke-width="1.150" stroke-linecap="round"><path d="M12.300 8.500A5.600 5.600 0 1 1 9.500 2"/><path d="M10.300 8.300A3.500 3.500 0 1 1 7 3.500a3.500 3.500 0 0 1 2.500 1"/><circle cx="7" cy="7" r="1.300"/><path d="M8 8l4 4.500"/></g></svg>
<div class="b " style="left:1233.1px;top:111.9px;width:25.00px;height:25.00px;border-radius:50%;background:rgba(255,255,255,.16)"></div>
<svg class="b" style="left:1238.6px;top:117.4px;" width="14" height="14" viewBox="0 0 14 14"><g fill="none" stroke="#c3d2ec" stroke-width="1.150" stroke-linecap="round" stroke-linejoin="round"><path d="M7 1a6 6 0 1 0 3.200 11.100l2.800.9-.8-2.800A6 6 0 0 0 7 1z"/><path d="M4.300 5.300h5.400M5.500 4.100l-1.200 1.200 1.200 1.200M9.700 8.700h-5.400M8.500 7.500l1.200 1.200-1.200 1.200"/></g></svg>
<div class="b " style="left:1226.8px;top:163px;width:38.20px;height:35.00px;background:rgba(255,255,255,.13);border-radius:5px"></div>
<svg class="b" style="left:1233.6px;top:168px;" width="24" height="24" viewBox="0 0 24 24"><defs><clipPath id="mav"><circle cx="12" cy="12" r="12"/></clipPath></defs><g clip-path="url(#mav)" opacity=".62"><rect width="24" height="24" fill="#6a7f9c"/><ellipse cx="12" cy="12" rx="5.800" ry="7" fill="#c9a898"/><path d="M5.500 11C5 5 8 2.800 12 2.800S19 5 18.500 11c-.6-2.500-1.300-4-2.300-4.500-2.200.9-5.700.9-8.400 0-1 .6-1.700 2-2.300 4.500z" fill="#4a4140"/><path d="M9.600 15.300q2.400 1.500 4.800 0" stroke="#eee" stroke-width="1" fill="none"/><ellipse cx="12" cy="25" rx="9" ry="5" fill="#8e99ab"/></g></svg>
<div class="b " style="left:1233.1999999999998px;top:207.7px;width:24.80px;height:24.80px;border-radius:50%;border:1px solid rgba(110,130,215,.75);background:transparent"></div>
<div class="b " style="left:1235.3999999999999px;top:209.9px;width:20.40px;height:20.40px;border-radius:50%;background:linear-gradient(40deg,#494abf,#6d4eb8)"></div>
<svg class="b" style="left:1239.6px;top:214.1px;" width="12" height="12" viewBox="0 0 12 12"><g fill="none" stroke="#7fa6c6" stroke-width="1.250" stroke-linecap="round" opacity=".95"><path d="M10.600 7.400A4.800 4.800 0 1 1 8.400 1.800"/><path d="M8.700 7.200A2.900 2.900 0 1 1 7.800 3.700"/><circle cx="6" cy="6" r=".9" fill="#7fa6c6"/><path d="M6.800 6.800l1.700 1.700"/></g></svg>
<div class="b " style="left:1233.35px;top:242.95px;width:24.50px;height:24.50px;border-radius:50%;background:#246d86"></div>
<span class="t" style="left:1242.74px;top:251.01px;font-size:9.5px;color:#86adbd;">V</span>
<div class="b " style="left:1233.1999999999998px;top:277.90000000000003px;width:24.80px;height:24.80px;border-radius:50%;border:1px solid rgba(110,130,215,.75);background:transparent"></div>
<div class="b " style="left:1235.3999999999999px;top:280.1px;width:20.40px;height:20.40px;border-radius:50%;background:linear-gradient(40deg,#3b40b4,#5544b0)"></div>
<svg class="b" style="left:1239.6px;top:284.3px;" width="12" height="12" viewBox="0 0 12 12"><g fill="none" stroke="#7fa6c6" stroke-width="1.250" stroke-linecap="round" opacity=".95"><path d="M10.600 7.400A4.800 4.800 0 1 1 8.400 1.800"/><path d="M8.700 7.200A2.900 2.900 0 1 1 7.800 3.700"/><circle cx="6" cy="6" r=".9" fill="#7fa6c6"/><path d="M6.800 6.800l1.700 1.700"/></g></svg>
<div class="b " style="left:1233.1999999999998px;top:313.0px;width:24.80px;height:24.80px;border-radius:50%;border:1px solid rgba(110,130,215,.75);background:transparent"></div>
<div class="b " style="left:1235.3999999999999px;top:315.2px;width:20.40px;height:20.40px;border-radius:50%;background:linear-gradient(40deg,#3f42b6,#5d46b2)"></div>
<svg class="b" style="left:1239.6px;top:319.4px;" width="12" height="12" viewBox="0 0 12 12"><g fill="none" stroke="#7fa6c6" stroke-width="1.250" stroke-linecap="round" opacity=".95"><path d="M10.600 7.400A4.800 4.800 0 1 1 8.400 1.800"/><path d="M8.700 7.200A2.900 2.900 0 1 1 7.800 3.700"/><circle cx="6" cy="6" r=".9" fill="#7fa6c6"/><path d="M6.800 6.800l1.700 1.700"/></g></svg>
<div class="b " style="left:1233.1999999999998px;top:348.1px;width:24.80px;height:24.80px;border-radius:50%;border:1px solid rgba(110,130,215,.75);background:transparent"></div>
<div class="b " style="left:1235.3999999999999px;top:350.3px;width:20.40px;height:20.40px;border-radius:50%;background:linear-gradient(40deg,#5547b4,#7a52b2)"></div>
<svg class="b" style="left:1239.6px;top:354.5px;" width="12" height="12" viewBox="0 0 12 12"><g fill="none" stroke="#7fa6c6" stroke-width="1.250" stroke-linecap="round" opacity=".95"><path d="M10.600 7.400A4.800 4.800 0 1 1 8.400 1.800"/><path d="M8.700 7.200A2.900 2.900 0 1 1 7.800 3.700"/><circle cx="6" cy="6" r=".9" fill="#7fa6c6"/><path d="M6.800 6.800l1.700 1.700"/></g></svg>
<div class="b " style="left:1233.35px;top:383.35px;width:24.50px;height:24.50px;border-radius:50%;background:#1e82c8"></div>
<svg class="b" style="left:1238.6px;top:388.1px;" width="14" height="15" viewBox="0 0 14 15"><path d="M.800 4.500h2l1.800 6h6l1.400-4.300H3.500" fill="none" stroke="#a9c3e6" stroke-width="1.300" stroke-linejoin="round"/><circle cx="5.300" cy="12.800" r="1" fill="#a9c3e6"/><circle cx="9.800" cy="12.800" r="1" fill="#a9c3e6"/><path d="M4.400 6.700h7.300l-1 3.300H5.300z" fill="#a9c3e6"/><circle cx="8.300" cy="3.300" r="2.900" fill="#3aa845"/><path d="M7 3.300l1 1 1.700-1.900" stroke="#1e5d2a" stroke-width=".9" fill="none"/></svg>
<div class="b " style="left:1233.35px;top:418.45000000000005px;width:24.50px;height:24.50px;border-radius:50%;background:#524e94"></div>
<svg class="b" style="left:1238.6px;top:425.20000000000005px;" width="14" height="11" viewBox="0 0 14 11"><path d="M2 10.300h11.300V2.500" fill="none" stroke="#aeb1dc" stroke-width="1.100"/><rect x="0" y="0" width="12" height="8.800" rx=".8" fill="#c4c6e6"/><circle cx="3.700" cy="3.300" r="1.300" fill="#54509f"/><path d="M1.700 7.200c.2-1.500 1-2 2-2s1.800.5 2 2z" fill="#54509f"/><path d="M7.300 2.800h3.300M7.300 5h3.300" stroke="#54509f" stroke-width="1.100"/></svg>
<div class="b " style="left:1233.3px;top:453.5px;width:24.60px;height:24.60px;border-radius:50%;background:#823e5a"></div>
<svg class="b" style="left:1239.6px;top:459.8px;" width="12" height="12" viewBox="0 0 12 12"><g opacity=".62"><path d="M1.400 1.200h9.200v9.600H1.400z" fill="none" stroke="#bcc8e4" stroke-width="1.500"/><path d="M1.400 7.300h2.300l.8 1.300h3l.8-1.300h2.300v3.500H1.400z" fill="#bcc8e4"/><path d="M4 4.300l1.500 1.500 2.700-3" fill="none" stroke="#bcc8e4" stroke-width="1.300"/></g></svg>
<div class="b " style="left:1233.3px;top:488.59999999999997px;width:24.60px;height:24.60px;border-radius:50%;background:#4c4c74"></div>
<svg class="b" style="left:1239.6px;top:494.9px;" width="12" height="12" viewBox="0 0 12 12"><g opacity=".62"><path d="M1.400 1.200h9.200v9.600H1.400z" fill="none" stroke="#bcc8e4" stroke-width="1.500"/><path d="M1.400 7.300h2.300l.8 1.300h3l.8-1.300h2.300v3.500H1.400z" fill="#bcc8e4"/><path d="M4 4.300l1.500 1.500 2.700-3" fill="none" stroke="#bcc8e4" stroke-width="1.300"/></g></svg>
<div class="b " style="left:1233.3px;top:523.7px;width:24.60px;height:24.60px;border-radius:50%;background:#8f3f88"></div>
<svg class="b" style="left:1239.6px;top:530.0px;" width="12" height="12" viewBox="0 0 12 12"><g opacity=".62"><path d="M1.400 1.200h9.200v9.600H1.400z" fill="none" stroke="#bcc8e4" stroke-width="1.500"/><path d="M1.400 7.300h2.300l.8 1.300h3l.8-1.300h2.300v3.500H1.400z" fill="#bcc8e4"/><path d="M4 4.300l1.500 1.500 2.700-3" fill="none" stroke="#bcc8e4" stroke-width="1.300"/></g></svg>
<div class="b " style="left:1234.3999999999999px;top:559.9px;width:22.40px;height:22.40px;border-radius:7px;background:#977447"></div>
<svg class="b" style="left:1239.6px;top:565.1px;" width="12" height="12" viewBox="0 0 12 12"><g opacity=".62"><path d="M1.400 1.200h9.200v9.600H1.400z" fill="none" stroke="#bcc8e4" stroke-width="1.500"/><path d="M1.400 7.300h2.300l.8 1.300h3l.8-1.300h2.300v3.500H1.400z" fill="#bcc8e4"/><path d="M4 4.300l1.500 1.500 2.700-3" fill="none" stroke="#bcc8e4" stroke-width="1.300"/></g></svg>
<div class="b " style="left:1233.3px;top:593.9000000000001px;width:24.60px;height:24.60px;border-radius:50%;background:#16568e"></div>
<svg class="b" style="left:1239.6px;top:600.2px;" width="12" height="12" viewBox="0 0 12 12"><g opacity=".62"><path d="M1.400 1.200h9.200v9.600H1.400z" fill="none" stroke="#bcc8e4" stroke-width="1.500"/><path d="M1.400 7.300h2.300l.8 1.300h3l.8-1.300h2.300v3.500H1.400z" fill="#bcc8e4"/><path d="M4 4.300l1.500 1.500 2.700-3" fill="none" stroke="#bcc8e4" stroke-width="1.300"/></g></svg>
<div class="b " style="left:1233.3px;top:629.0000000000001px;width:24.60px;height:24.60px;border-radius:50%;background:#3d4284"></div>
<svg class="b" style="left:1239.6px;top:635.3000000000001px;" width="12" height="12" viewBox="0 0 12 12"><g opacity=".62"><path d="M1.400 1.200h9.200v9.600H1.400z" fill="none" stroke="#bcc8e4" stroke-width="1.500"/><path d="M1.400 7.300h2.300l.8 1.300h3l.8-1.300h2.300v3.500H1.400z" fill="#bcc8e4"/><path d="M4 4.300l1.500 1.500 2.700-3" fill="none" stroke="#bcc8e4" stroke-width="1.300"/></g></svg>
<div class="b " style="left:949.2px;top:50px;width:201.10px;height:177.20px;background:#fff;border-radius:14px;box-shadow:0 6px 22px rgba(60,70,90,.16),0 0 2px rgba(60,70,90,.10);z-index:20"></div>
<span class="t" style="left:963.30px;top:65.01px;font-size:11.2px;color:#333;z-index:21;">Angebot (Deutschland)</span>
<span class="t" style="left:963.30px;top:93.01px;font-size:11.2px;color:#333;z-index:21;">Auftragsbestätigung (Deutschland)</span>
<div class="b " style="left:963.3px;top:117.7px;width:173.70px;height:1.00px;background:#eff1f3;z-index:21"></div>
<span class="t" style="left:962.40px;top:133.00px;font-size:11.2px;color:#333;z-index:21;">Dokumente</span>
<span class="t" style="left:962.40px;top:161.00px;font-size:11.2px;color:#333;z-index:21;">Neue Vorlage hinzufügen</span>
<div class="b " style="left:963.3px;top:185.3px;width:173.70px;height:1.00px;background:#eff1f3;z-index:21"></div>
<span class="t" style="left:962.40px;top:201.00px;font-size:11.2px;color:#333;z-index:21;">Erweiterungen</span>
<svg class="b" style="left:1125px;top:201.5px;z-index:21" width="7" height="10.5" viewBox="0 0 7 10.500"><path d="M1 .8l4.700 4.450L1 9.700" fill="none" stroke="#c2c6cc" stroke-width="1.100" stroke-linecap="round" stroke-linejoin="round"/></svg>
<div class="b " style="left:947px;top:22.4px;width:79.40px;height:29.40px;border:2.600px solid #fb594c;border-radius:4px;box-shadow:0.5px 2px 2px rgba(0,0,0,.62), inset 0.5px 2px 2px rgba(0,0,0,.32);z-index:30"></div>
<div class="b " style="left:956.2px;top:147.2px;width:170.80px;height:38.60px;border:2.600px solid #fb594c;border-radius:4px;box-shadow:0.5px 2px 2px rgba(0,0,0,.62), inset 0.5px 2px 2px rgba(0,0,0,.32);z-index:30"></div>
<div class="b " style="left:1014.9px;top:10.5px;width:24.60px;height:24.60px;background:#fd594c;border-radius:50%;z-index:31"></div>
<span class="t" style="left:1023.41px;top:18.00px;font-size:12.6px;color:#fff;font-weight:700;z-index:32;">4</span>
<div class="b " style="left:1109.5px;top:135.5px;width:24.60px;height:24.60px;background:#fd594c;border-radius:50%;z-index:31"></div>
<span class="t" style="left:1118.27px;top:143.01px;font-size:12.6px;color:#fff;font-weight:700;z-index:32;">5</span>
</body></html>
